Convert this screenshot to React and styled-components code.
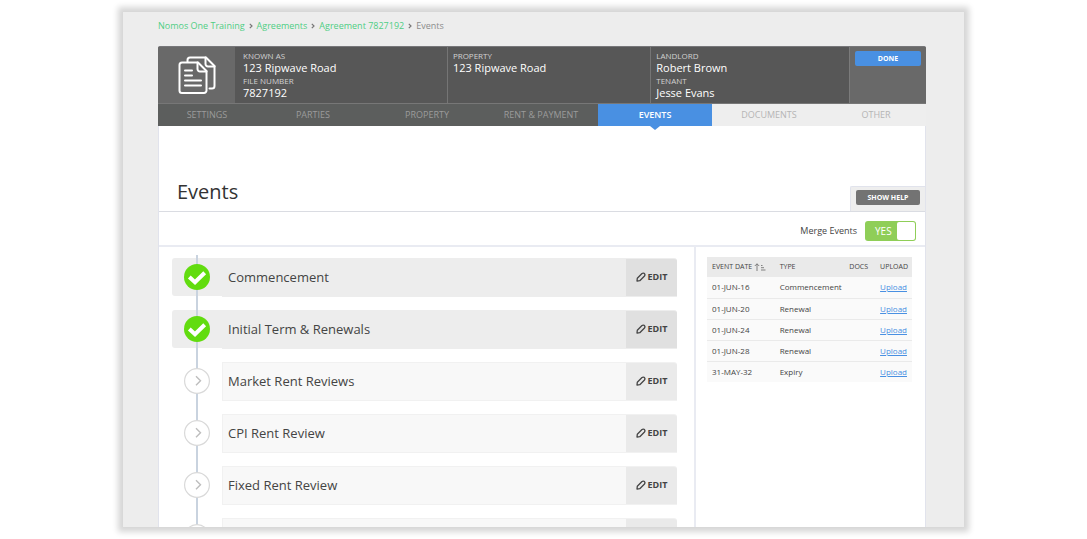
import { useState } from "react";
import styled, { createGlobalStyle } from "styled-components";

const GlobalStyle = createGlobalStyle`
    *{
        box-sizing: border-box;
    }
    body{
        margin: 0;
        background: #ffffff;
        color: #444444;
        font-family: "Open Sans", "Noto Sans", sans-serif;
    }
    h1, p, dl, dd, ul, ol{
        margin: 0;
        padding: 0;
    }
    ul, ol{
        list-style-type: none;
    }
    button{
        font-family: inherit;
        border: none;
        cursor: pointer;
    }
    a{
        text-decoration: none;
    }
`;

const Page = styled.div`
    height: 100vh;
    padding: 12px 123px;
    overflow: hidden;
`;

const Frame = styled.div`
    height: 100%;
    padding: 0 38px 0 35px;
    overflow: hidden;
    background: #ededed;
    box-shadow: 0 0 6px 5px #d6d6d6;
`;

const Breadcrumb = styled.nav`
    height: 34px;
    padding-bottom: 8px;
    display: flex;
    align-items: center;
    gap: 4px;
    font-size: 9px;
    color: #8c8c8c;

    >a{
        color: #4fce84;
    }
    >svg{
        width: 4px;
        height: 6px;
        margin-top: 2px;
    }
`;

const Summary = styled.header`
    height: 58px;
    display: flex;
    overflow: hidden;
    border-top: 1px solid #77777a;
    border-bottom: 1px solid #777777;
    border-radius: 2px 2px 0 0;
    background: #575757;
`;

const SummarySide = styled.div`
    flex: 0 0 77px;
    padding: 4px 5px;
    display: flex;
    align-items: ${({ $center }) => ($center ? "center" : "flex-start")};
    justify-content: center;
    background: #696969;
    border-left: ${({ $center }) => ($center ? "none" : "1px solid #7b7b7b")};
`;

const Facts = styled.dl`
    flex: ${({ $grow }) => $grow} 1 0;
    padding: 4px 8px 0 5px;
    color: #ffffff;
    border-left: 1px solid #757575;

    &:nth-child(2){
        padding-left: 8px;
        border-left: none;
    }
    dt{
        font-size: 8px;
        line-height: 10px;
        color: #d2d2d2;
    }
    dd{
        padding-bottom: 2px;
        font-size: 11px;
        line-height: 13px;
    }
`;

const Button = styled.button`
    display: block;
    width: 100%;
    height: 15px;
    padding: 0;
    border-radius: 2px;
    background: ${({ $color }) => $color};
    color: #ffffff;
    font-size: 7px;
    font-weight: 700;
    line-height: 15px;
`;

const Tabs = styled.nav`
    height: 22px;
    display: flex;
`;

const Tab = styled.a`
    flex: ${({ $grow }) => $grow} 1 0;
    position: relative;
    padding-bottom: 2px;
    display: flex;
    align-items: center;
    justify-content: center;
    font-size: 9px;
    background: ${({ $kind }) => ({ dark: "#5c5e5d", active: "#4990e2", light: "#eeeeee" })[$kind]};
    color: ${({ $kind }) => ({ dark: "#9b9b9b", active: "#ffffff", light: "#b5b5b5" })[$kind]};
    font-weight: ${({ $kind }) => ($kind === "active" ? 600 : 400)};

    &[aria-current]::after{
        content: "";
        position: absolute;
        top: 100%;
        left: 50%;
        margin-left: -5px;
        border: 5px solid transparent;
        border-top: 4px solid #4990e2;
        border-bottom: none;
    }
`;

const Panel = styled.main`
    background: #ffffff;
    border: 1px solid #e1e3ec;
    border-top: none;
`;

const TitleBar = styled.div`
    height: 86px;
    padding-left: 18px;
    display: flex;
    align-items: flex-end;
    justify-content: space-between;
    border-bottom: 1px solid #dadce2;

    >h1{
        padding-bottom: 5px;
        font-size: 20px;
        font-weight: 400;
        line-height: 28px;
        color: #333333;
    }
`;

const HelpTab = styled.div`
    width: 75px;
    height: 25px;
    padding: 3px 5px;
    background: #eeeeee;
    border: 1px solid #e1e3ec;
    border-right: none;
    border-bottom: none;
    border-radius: 2px 0 0 0;
`;

const MergeBar = styled.div`
    height: 35px;
    padding: 4px 9px 0 0;
    display: flex;
    align-items: center;
    justify-content: flex-end;
    border-bottom: 2px solid #e9ebf2;
`;

const Toggle = styled.label`
    display: flex;
    align-items: center;
    gap: 8px;
    font-size: 9px;
    cursor: pointer;

    >span{
        position: relative;
        width: 51px;
        height: 20px;
        padding: 0 10px;
        border-radius: 3px;
        background: ${({ $on }) => ($on ? "#8fce58" : "#b5b5b5")};
        color: #ffffff;
        font-size: 10px;
        line-height: 20px;
        text-align: ${({ $on }) => ($on ? "left" : "right")};
    }
    input{
        appearance: none;
        position: absolute;
        top: 1px;
        ${({ $on }) => ($on ? "right" : "left")}: 1px;
        width: 18px;
        height: 18px;
        margin: 0;
        border-radius: 2px;
        background: #ffffff;
        cursor: pointer;
    }
`;

const Columns = styled.div`
    display: grid;
    grid-template-columns: minmax(0, 1fr) 229px;
`;

const Steps = styled.ol`
    padding: 8px 17px 40px 13px;
    border-right: 2px solid #e9ebf2;
`;

const Step = styled.li`
    height: 52px;
    display: flex;
    align-items: flex-start;
    padding-top: 2px;
    background: linear-gradient(#c9d3df, #c9d3df) 24px 0 / 2px 100% no-repeat;

    &:first-child{
        height: 53px;
        padding-top: 3px;
    }
`;

const StepMark = styled.div`
    flex: 0 0 50px;
    height: 38px;
    display: flex;
    align-items: center;
    justify-content: center;
    border-radius: 3px 0 0 3px;
    background: ${({ $done }) => ($done ? "linear-gradient(#c9d3df, #c9d3df) 24px 0 / 2px 100% no-repeat, #ededed" : "none")};

    >svg{
        width: 26px;
        height: 26px;
    }
`;

const StepCard = styled.div`
    flex: 1;
    height: 39px;
    display: flex;
    align-items: center;
    justify-content: space-between;
    overflow: hidden;
    border: 1px solid ${({ $done }) => ($done ? "#ededed" : "#f1f1f1")};
    border-right: none;
    border-radius: 0 3px 0 0;
    background: ${({ $done }) => ($done ? "#ededed" : "#f8f8f8")};

    >span{
        padding: 0 5px 2px;
        font-size: 13px;
    }
    >button{
        width: 51px;
        height: 100%;
        padding: 0 0 2px;
        display: flex;
        align-items: center;
        justify-content: center;
        gap: 2px;
        background: ${({ $done }) => ($done ? "#e0e0e0" : "#eaeaea")};
        color: #444444;
        font-size: 9px;
        font-weight: 700;
    }
    >button svg{
        width: 10px;
        height: 10px;
    }
`;

const Schedule = styled.aside`
    padding: 10px 13px 0 11px;
`;

const EventTable = styled.table`
    width: 100%;
    border-collapse: collapse;
    table-layout: fixed;
    background: #fafafa;
    font-size: 8px;

    th, td{
        height: 21px;
        padding: 0 0 1px 5px;
        text-align: left;
        white-space: nowrap;
    }
    th{
        height: 20px;
        background: #eaeaea;
        font-size: 7px;
        font-weight: 400;
    }
    tbody tr + tr{
        border-top: 1px solid #eaeaea;
    }
    td a{
        color: #4990e2;
        text-decoration: underline;
    }
    th button{
        display: flex;
        align-items: center;
        gap: 2px;
        padding: 0;
        background: none;
        color: inherit;
        font-size: inherit;
    }
`;

const tabs = [
    { name: "SETTINGS", kind: "dark", grow: 98 },
    { name: "PARTIES", kind: "dark", grow: 114 },
    { name: "PROPERTY", kind: "dark", grow: 114 },
    { name: "RENT & PAYMENT", kind: "dark", grow: 114 },
    { name: "EVENTS", kind: "active", grow: 114 },
    { name: "DOCUMENTS", kind: "light", grow: 114 },
    { name: "OTHER", kind: "light", grow: 100 },
];

const steps = [
    { name: "Commencement", done: true },
    { name: "Initial Term & Renewals", done: true },
    { name: "Market Rent Reviews" },
    { name: "CPI Rent Review" },
    { name: "Fixed Rent Review" },
    { name: "" },
];

const events = [
    { date: "01-JUN-16", type: "Commencement" },
    { date: "01-JUN-20", type: "Renewal" },
    { date: "01-JUN-24", type: "Renewal" },
    { date: "01-JUN-28", type: "Renewal" },
    { date: "31-MAY-32", type: "Expiry" },
];

const Chevron = () => (
    <svg viewBox="0 0 4 6" fill="none" stroke="#777777" strokeWidth="1.2" aria-hidden="true">
        <path d="M.8 .8 3 3 .8 5.2" />
    </svg>
);

const DocumentsIcon = () => (
    <svg width="38" height="38" viewBox="0 0 38 38" fill="none" stroke="#ffffff" strokeWidth="2" strokeLinejoin="round" strokeLinecap="round" aria-hidden="true">
        <path d="M9.5 5.5V4A2.500 2.500 0 0 1 12 1.500H28L36.500 10V30A2.500 2.500 0 0 1 34 32.500H31.500" />
        <path d="M27.500 1.500V8A2.500 2.500 0 0 0 30 10.500H36.500" />
        <path d="M4 6.500H20L28.500 15V34.500A2.500 2.500 0 0 1 26 37H4A2.500 2.500 0 0 1 1.500 34.500V9A2.500 2.500 0 0 1 4 6.500Z" />
        <path d="M19.500 6.500V13A2.500 2.500 0 0 0 22 15.500H28.500" />
        <path d="M7 14.500H14M7 19.500H14M7 24.500H23M7 29.500H23" />
    </svg>
);

const DoneIcon = () => (
    <svg viewBox="0 0 26 26" role="img" aria-label="Complete">
        <circle cx="13" cy="13" r="13" fill="#62dc0f" />
        <path d="M5.300 13 11 18.300 20.700 8.800" fill="none" stroke="#ffffff" strokeWidth="4" />
    </svg>
);

const OpenIcon = () => (
    <svg viewBox="0 0 26 26" fill="none" aria-hidden="true">
        <circle cx="13" cy="13" r="12.400" fill="#ffffff" stroke="#d9d9d9" strokeWidth="1.200" />
        <path d="M12 8.200 16.500 12.700 12 17.200" stroke="#bdbdbd" strokeWidth="1.400" />
    </svg>
);

const PencilIcon = () => (
    <svg viewBox="0 0 10 10" fill="none" stroke="#444444" strokeWidth="1.300" strokeLinejoin="round" aria-hidden="true">
        <path d="M1 9 1.300 6.200 6 1.500Q7 .7 8 1.300L8.700 2Q9.300 3 8.500 4L3.800 8.700Z" />
    </svg>
);

const SortIcon = () => (
    <svg width="12" height="8" viewBox="0 0 12 8" fill="none" stroke="#666666" strokeWidth=".8" aria-hidden="true">
        <path d="M3 8V.8M.8 3 3 .8 5.200 3M7 2.500H8.500M7 4.700H10M7 7H11.500" />
    </svg>
);

const App = () => {
    const [merged, setMerged] = useState(true);

    return (
        <Page>
            <GlobalStyle />
            <Frame>
                <Breadcrumb aria-label="Breadcrumb">
                    <a href="#training">Nomos One Training</a>
                    <Chevron />
                    <a href="#agreements">Agreements</a>
                    <Chevron />
                    <a href="#agreement">Agreement 7827192</a>
                    <Chevron />
                    <span>Events</span>
                </Breadcrumb>
                <Summary>
                    <SummarySide $center>
                        <DocumentsIcon />
                    </SummarySide>
                    <Facts $grow={211}>
                        <dt>KNOWN AS</dt>
                        <dd>123 Ripwave Road</dd>
                        <dt>FILE NUMBER</dt>
                        <dd>7827192</dd>
                    </Facts>
                    <Facts $grow={204}>
                        <dt>PROPERTY</dt>
                        <dd>123 Ripwave Road</dd>
                    </Facts>
                    <Facts $grow={199}>
                        <dt>LANDLORD</dt>
                        <dd>Robert Brown</dd>
                        <dt>TENANT</dt>
                        <dd>Jesse Evans</dd>
                    </Facts>
                    <SummarySide>
                        <Button type="button" $color="#4990e2">DONE</Button>
                    </SummarySide>
                </Summary>
                <Tabs aria-label="Agreement sections">
                    {tabs.map((tab) => (
                        <Tab
                            key={tab.name}
                            href={`#${tab.name.toLowerCase()}`}
                            $kind={tab.kind}
                            $grow={tab.grow}
                            aria-current={tab.kind === "active" ? "page" : undefined}
                        >
                            {tab.name}
                        </Tab>
                    ))}
                </Tabs>
                <Panel>
                    <TitleBar>
                        <h1>Events</h1>
                        <HelpTab>
                            <Button type="button" $color="#737373">SHOW HELP</Button>
                        </HelpTab>
                    </TitleBar>
                    <MergeBar>
                        <Toggle $on={merged}>
                            Merge Events
                            <span>
                                {merged ? "YES" : "NO"}
                                <input
                                    type="checkbox"
                                    checked={merged}
                                    onChange={(e) => setMerged(e.target.checked)}
                                />
                            </span>
                        </Toggle>
                    </MergeBar>
                    <Columns>
                        <Steps>
                            {steps.map((step) => (
                                <Step key={step.name}>
                                    <StepMark $done={step.done}>
                                        {step.done ? <DoneIcon /> : <OpenIcon />}
                                    </StepMark>
                                    <StepCard $done={step.done}>
                                        <span>{step.name}</span>
                                        <button type="button" aria-label={`Edit ${step.name}`}>
                                            {step.name && (
                                                <>
                                                    <PencilIcon />
                                                    EDIT
                                                </>
                                            )}
                                        </button>
                                    </StepCard>
                                </Step>
                            ))}
                        </Steps>
                        <Schedule>
                            <EventTable>
                                <colgroup>
                                    <col width="33%" />
                                    <col width="34%" />
                                    <col width="15%" />
                                    <col width="18%" />
                                </colgroup>
                                <thead>
                                    <tr>
                                        <th>
                                            <button type="button">
                                                EVENT DATE
                                                <SortIcon />
                                            </button>
                                        </th>
                                        <th>TYPE</th>
                                        <th>DOCS</th>
                                        <th>UPLOAD</th>
                                    </tr>
                                </thead>
                                <tbody>
                                    {events.map((event) => (
                                        <tr key={event.date}>
                                            <td>{event.date}</td>
                                            <td>{event.type}</td>
                                            <td></td>
                                            <td><a href="#upload">Upload</a></td>
                                        </tr>
                                    ))}
                                </tbody>
                            </EventTable>
                        </Schedule>
                    </Columns>
                </Panel>
            </Frame>
        </Page>
    );
};

export default App;
